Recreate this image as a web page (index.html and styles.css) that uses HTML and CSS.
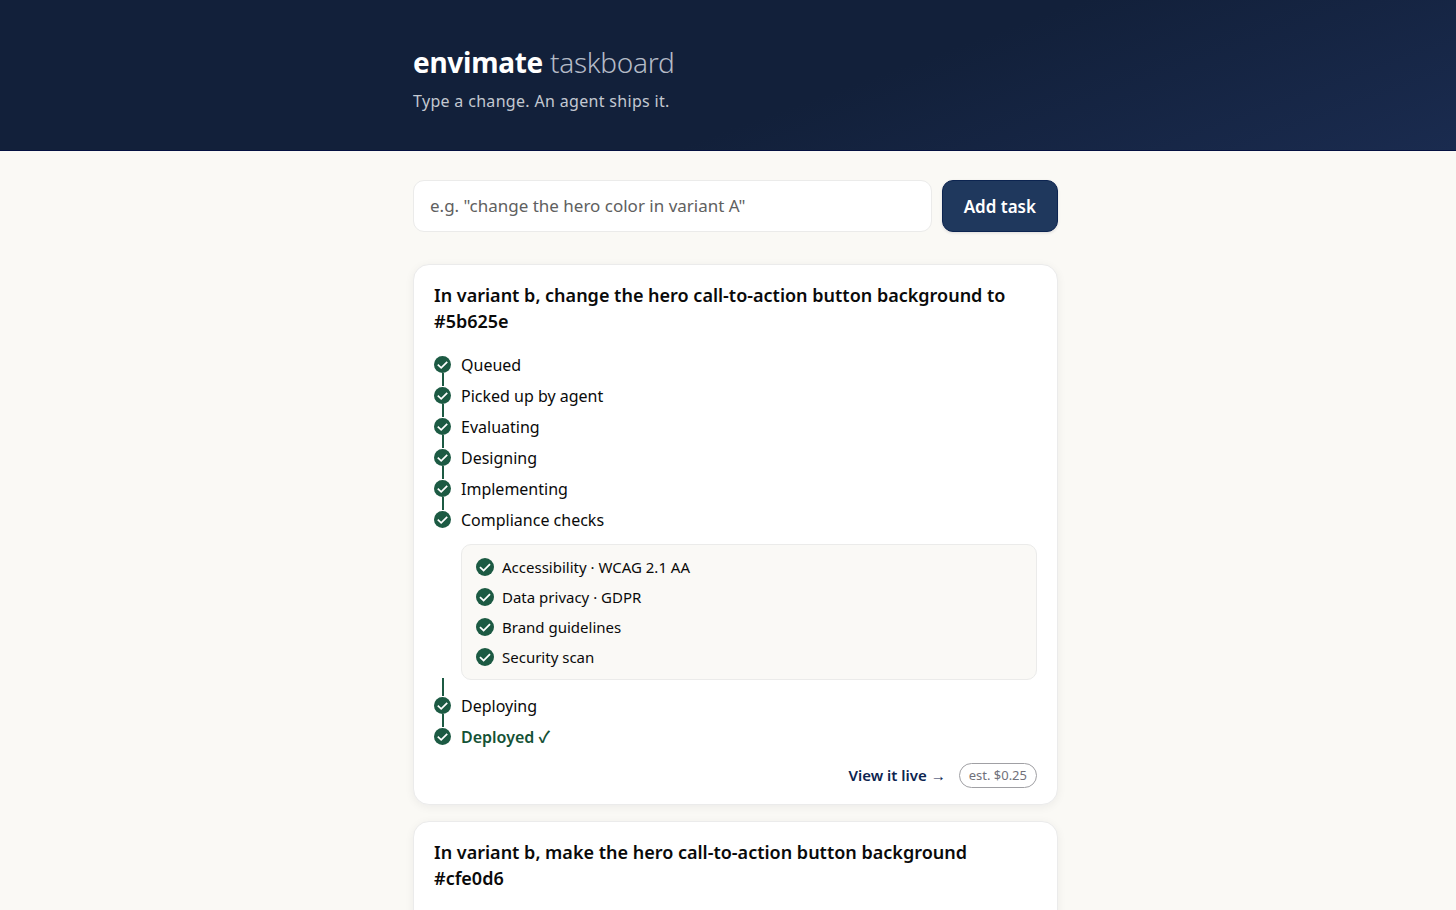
FILE: index.html
```
<!DOCTYPE html>
<html lang="en">
<head>
<meta charset="utf-8">
<title>envimate taskboard</title>
<link rel="stylesheet" href="styles.css">
</head>
<body>
<svg class="sprite" aria-hidden="true">
  <symbol id="check" viewBox="0 0 18 18">
    <circle cx="9" cy="9" r="9" fill="#1c5a43"/>
    <path d="M4 9.2 7.6 12.6 14 6.2" fill="none" stroke="#fff" stroke-width="1.8"/>
  </symbol>
</svg>
<header class="hero">
  <div class="container">
    <h1 class="brand">envimate <span class="brand-sub">taskboard</span></h1>
    <p class="tagline">Type a change. An agent ships it.</p>
  </div>
</header>
<main class="container board">
  <form class="task-form">
    <input class="task-input" type="text" aria-label="New task" placeholder="e.g. &quot;change the hero color in variant A&quot;">
    <button class="task-submit" type="submit">Add task</button>
  </form>
  <article class="card">
    <h2 class="card-title">In variant b, change the hero call-to-action button background to #5b625e</h2>
    <ol class="steps">
      <li class="step"><svg class="icon"><use href="#check"/></svg><span>Queued</span></li>
      <li class="step"><svg class="icon"><use href="#check"/></svg><span>Picked up by agent</span></li>
      <li class="step"><svg class="icon"><use href="#check"/></svg><span>Evaluating</span></li>
      <li class="step"><svg class="icon"><use href="#check"/></svg><span>Designing</span></li>
      <li class="step"><svg class="icon"><use href="#check"/></svg><span>Implementing</span></li>
      <li class="step"><svg class="icon"><use href="#check"/></svg><span>Compliance checks</span></li>
      <li class="substeps">
        <ul class="checks">
          <li class="check"><svg class="icon"><use href="#check"/></svg><span>Accessibility · WCAG 2.1 AA</span></li>
          <li class="check"><svg class="icon"><use href="#check"/></svg><span>Data privacy · GDPR</span></li>
          <li class="check"><svg class="icon"><use href="#check"/></svg><span>Brand guidelines</span></li>
          <li class="check"><svg class="icon"><use href="#check"/></svg><span>Security scan</span></li>
        </ul>
      </li>
      <li class="step"><svg class="icon"><use href="#check"/></svg><span>Deploying</span></li>
      <li class="step step-final"><svg class="icon"><use href="#check"/></svg><span>Deployed <span class="tick">✓</span></span></li>
    </ol>
    <footer class="card-footer">
      <a class="live-link" href="#live">View it live <span class="arrow">→</span></a>
      <span class="cost">est. $0.25</span>
    </footer>
  </article>
  <article class="card card-last">
    <h2 class="card-title">In variant b, make the hero call-to-action button background #cfe0d6</h2>
  </article>
</main>
</body>
</html>
```
FILE: styles.css
```
* {
  box-sizing: border-box;
}

html {
  height: 100%;
  overflow: hidden;
}

body {
  margin: 0;
  height: 100%;
  overflow: hidden;
  padding-left: 15px;
  background: #faf9f5;
  color: #0a0a0a;
  font-family: "Noto Sans", "DejaVu Sans", sans-serif;
  font-size: 16px;
}

h1, h2, p, ol, ul {
  margin: 0;
  padding: 0;
}

ol, ul {
  list-style: none;
}

.sprite {
  display: none;
}

.container {
  max-width: 645px;
  margin: 0 auto;
}

.hero {
  margin-left: -15px;
  padding: 41px 0 36px 15px;
  background: linear-gradient(160deg, #12203a 0%, #12203a 58%, #1a2b4f 100%);
  border-bottom: 1px solid #041040;
}

.brand {
  color: #fff;
  font-size: 28px;
  line-height: 42px;
  font-weight: 700;
  letter-spacing: -0.01em;
}

.brand-sub {
  font-weight: 300;
  color: #b4bac6;
}

.tagline {
  margin-top: 6px;
  color: #c3c8d1;
  font-size: 16px;
  line-height: 25px;
  letter-spacing: 0.02em;
}

.board {
  display: flex;
  flex-direction: column;
  gap: 16px;
  padding-top: 29px;
}

.task-form {
  display: flex;
  gap: 10px;
  margin-bottom: 16px;
}

.task-input {
  flex: 1;
  min-width: 0;
  height: 52px;
  padding: 0 16px 1px;
  border: 1px solid #ebebea;
  border-radius: 11px;
  background: #fff;
  color: #111;
  font: inherit;
  font-size: 17px;
}

.task-input::placeholder {
  color: #606060;
  opacity: 1;
}

.task-submit {
  padding: 0 21px;
  border: 1px solid #0c2450;
  border-radius: 11px;
  background: #1f385d;
  box-shadow: 0 1px 3px rgba(20, 20, 40, 0.12);
  color: #fff;
  font: inherit;
  font-size: 17px;
  font-weight: 600;
}

.card {
  padding: 17px 20px 16px;
  border: 1px solid #ebebeb;
  border-radius: 16px;
  background: #fff;
  box-shadow: 0 2px 10px rgba(20, 20, 40, 0.06);
}

.card-last {
  padding-bottom: 48px;
}

.card-title {
  margin-bottom: 15px;
  font-size: 18px;
  line-height: 26px;
  font-weight: 600;
}

.step {
  position: relative;
  display: flex;
  align-items: center;
  gap: 10px;
  height: 31px;
  font-size: 16px;
}

.icon {
  flex: none;
  display: block;
  width: 17px;
  height: 17px;
}

.step + .step::before,
.substeps + .step::before {
  content: "";
  position: absolute;
  left: 8px;
  bottom: 25px;
  width: 2px;
  height: 13px;
  background: #1c5a43;
}

.substeps + .step::before {
  height: 18px;
}

.checks {
  display: grid;
  gap: 8px;
  margin: 9px 0 10px 27px;
  padding: 11px 14px;
  border: 1px solid #ebebea;
  border-radius: 10px;
  background: #faf9f6;
}

.check {
  display: flex;
  align-items: center;
  gap: 8px;
  height: 22px;
  font-size: 15px;
}

.check .icon {
  width: 18px;
  height: 18px;
}

.step-final {
  color: #145236;
  font-weight: 600;
}

.tick {
  font-family: "Noto Sans CJK JP", "DejaVu Sans", sans-serif;
  font-weight: 700;
  line-height: 1;
}

.card-footer {
  display: flex;
  justify-content: flex-end;
  align-items: center;
  gap: 13px;
  margin-top: 11px;
}

.live-link {
  color: #0c2450;
  font-size: 15px;
  font-weight: 600;
  line-height: 22px;
  text-decoration: none;
}

.arrow {
  font-family: "Liberation Sans", sans-serif;
  font-weight: 400;
}

.cost {
  padding: 0 9px;
  border: 1px solid #a0a0a4;
  border-radius: 13px;
  color: #71717a;
  font-size: 13px;
  line-height: 23px;
}
```
